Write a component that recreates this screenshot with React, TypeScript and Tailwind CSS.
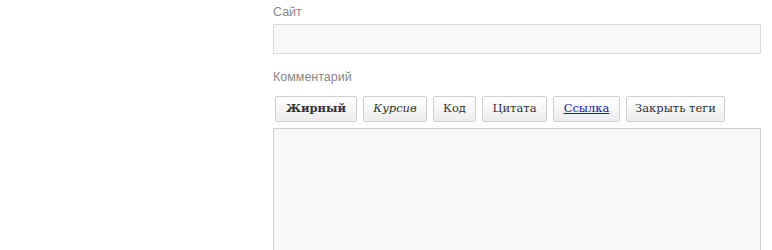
import React from 'react';

const buttons = [
  { label: 'Жирный', cls: 'font-bold w-[82px] text-[#333]' },
  { label: 'Курсив', cls: 'italic w-[64px] text-[#333]' },
  { label: 'Код', cls: 'w-[43px] text-[#333]' },
  { label: 'Цитата', cls: 'w-[65px] text-[#333]' },
  { label: 'Ссылка', cls: 'underline w-[67px] text-[#1a1aa6]' },
  { label: 'Закрыть теги', cls: 'w-[99px] text-[#333]' },
];

const App: React.FC = () => {
  return (
    <div className="w-[772px] h-[250px] overflow-hidden bg-white font-['Liberation_Sans',Arial,sans-serif]">
      <div className="ml-[273px] w-[488px] pt-[4px]">
        {/* Сайт */}
        <label className="block text-[12.5px] leading-[16px] text-[#888]">Сайт</label>
        <input
          type="text"
          className="mt-[4px] block w-full h-[30px] border border-[#dcdcdc] bg-[#f8f8f8] outline-none"
        />
        {/* Комментарий */}
        <label className="mt-[15px] block text-[12.5px] leading-[16px] text-[#888]">Комментарий</label>
        <div className="mt-[11px] flex gap-[6px] pl-[2px]">
          {buttons.map((b) => (
            <button
              key={b.label}
              className={`h-[26px] rounded-[2px] border border-[#d0d0d0] bg-gradient-to-b from-white to-[#ececec] text-[11.5px] font-['DejaVu_Serif',Georgia,serif] ${b.cls}`}
            >
              {b.label}
            </button>
          ))}
        </div>
        <textarea className="mt-[6px] block w-full h-[160px] border border-[#d0d0d0] bg-[#f8f8f8] outline-none resize-none" />
      </div>
    </div>
  );
};

export default App;
